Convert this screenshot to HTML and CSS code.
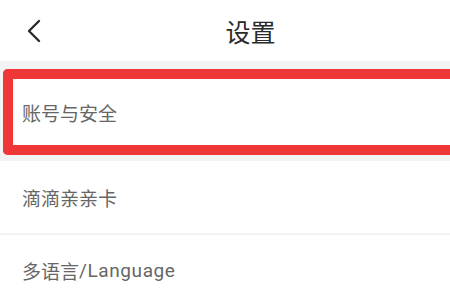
FILE: index.html
```html
<!DOCTYPE html>
<html lang="zh-CN">
<head>
<meta charset="utf-8">
<link rel="stylesheet" href="styles.css">
</head>
<body>
<header class="topbar">
  <span class="back">
    <svg width="16" height="24" viewBox="0 0 16 24"><path d="M13 2 L3 12 L13 22" fill="none" stroke="#2b2b2b" stroke-width="2.4" stroke-linecap="round" stroke-linejoin="round"/></svg>
  </span>
  <h1 class="title">设置</h1>
</header>
<section class="band">
  <div class="row highlighted">账号与安全</div>
</section>
<div class="row plain first">滴滴亲亲卡</div>
<div class="divider"></div>
<div class="row plain last">多语言<span class="latin">/Language</span></div>
</body>
</html>
```
FILE: styles.css
```css
html, body {
  margin: 0;
  padding: 0;
  background: #ffffff;
  font-family: "Noto Sans CJK SC", sans-serif;
  overflow: hidden;
}
.topbar {
  height: 61px;
  display: flex;
  align-items: center;
  justify-content: center;
  position: relative;
  background: #ffffff;
}
.back {
  position: absolute;
  left: 26px;
  top: 19px;
  display: flex;
}
.title {
  margin: 0;
  padding: 1px 0 0 51px;
  font-size: 25px;
  font-weight: 400;
  color: #2a2a2a;
  font-family: "Noto Sans CJK SC", sans-serif;
}
.band {
  background: #f3f3f3;
  padding: 8px 0 6px 3px;
}
.row {
  display: flex;
  align-items: center;
  font-size: 19px;
  font-weight: 400;
  color: #666666;
  font-family: "Noto Sans CJK SC", sans-serif;
}
.row .latin {
  font-family: Roboto, sans-serif;
  font-weight: 400;
  letter-spacing: 0.6px;
}
.highlighted {
  background: #ffffff;
  border: 10px solid #ee3838;
  border-right: none;
  border-radius: 5px 0 0 5px;
  height: 66px;
  padding-left: 9px;
  box-sizing: content-box;
}
.plain {
  padding-left: 22px;
}
.first {
  height: 71px;
  padding-top: 1px;
}
.divider {
  height: 2px;
  background: #f3f3f3;
}
.last {
  height: 70px;
}
```
